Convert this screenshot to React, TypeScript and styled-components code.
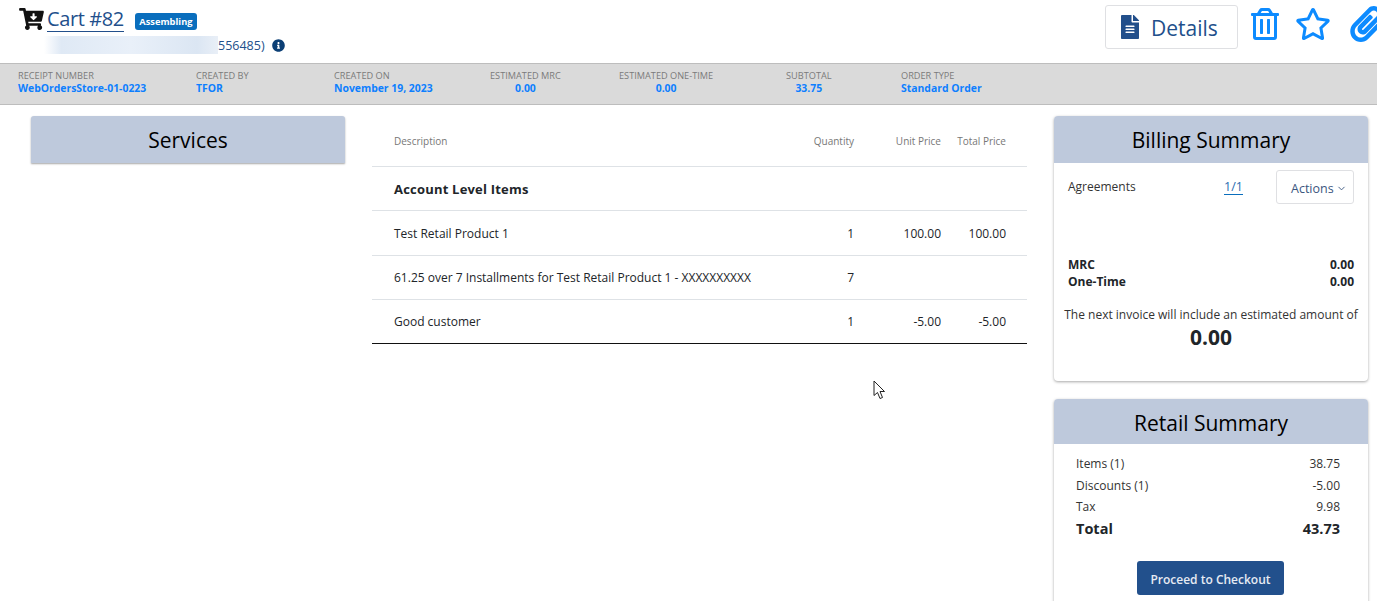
import React from "react";
import styled, { createGlobalStyle } from "styled-components";
import {
  FaCartArrowDown,
  FaFileAlt,
  FaInfoCircle,
  FaRegStar,
  FaRegTrashAlt,
  FaPaperclip,
} from "react-icons/fa";
import { LuChevronDown } from "react-icons/lu";

const metaItems = [
  { label: "RECEIPT NUMBER", value: "WebOrdersStore-01-0223" },
  { label: "CREATED BY", value: "TFOR" },
  { label: "CREATED ON", value: "November 19, 2023" },
  { label: "ESTIMATED MRC", value: "0.00", centered: true },
  { label: "ESTIMATED ONE-TIME", value: "0.00", centered: true },
  { label: "SUBTOTAL", value: "33.75", centered: true },
  { label: "ORDER TYPE", value: "Standard Order" },
];

const lineItems = [
  { name: "Test Retail Product 1", qty: "1", unit: "100.00", total: "100.00" },
  { name: "61.25 over 7 Installments for Test Retail Product 1 - XXXXXXXXXX", qty: "7", unit: "", total: "" },
  { name: "Good customer", qty: "1", unit: "-5.00", total: "-5.00" },
];

const retailRows = [
  { label: "Items (1)", value: "38.75" },
  { label: "Discounts (1)", value: "-5.00" },
  { label: "Tax", value: "9.98" },
];

const App = () => (
  <Page>
    <GlobalStyle />
    <Header>
      <TitleBlock>
        <TitleRow>
          <CartIcon />
          <CartTitle>Cart #82</CartTitle>
          <StatusBadge>Assembling</StatusBadge>
        </TitleRow>
        <CustomerRow>
          <Redacted />
          <CustomerId>556485)</CustomerId>
          <InfoIcon />
        </CustomerRow>
      </TitleBlock>
      <HeaderActions>
        <DetailsButton>
          <DetailsIcon />
          <DetailsLabel>Details</DetailsLabel>
        </DetailsButton>
        <IconSlot $left={11}><FaRegTrashAlt size={32} /></IconSlot>
        <IconSlot $left={14}><FaRegStar size={36} /></IconSlot>
        <IconSlot $left={17}><FaPaperclip size={36} /></IconSlot>
      </HeaderActions>
    </Header>

    <MetaBar>
      {metaItems.map((item) => (
        <MetaItem key={item.label} $centered={item.centered}>
          <MetaLabel>{item.label}</MetaLabel>
          <MetaValue>{item.value}</MetaValue>
        </MetaItem>
      ))}
    </MetaBar>

    <Main>
      <LeftColumn>
        <ServicesHeader>Services</ServicesHeader>
      </LeftColumn>

      <TableColumn>
        <HeadRow>
          <span>Description</span>
          <Num>Quantity</Num>
          <Num>Unit Price</Num>
          <Num>Total Price</Num>
        </HeadRow>
        <SectionRow>Account Level Items</SectionRow>
        {lineItems.map((line, i) => (
          <ItemRow key={line.name} $last={i === lineItems.length - 1}>
            <span>{line.name}</span>
            <Num>{line.qty}</Num>
            <Num>{line.unit}</Num>
            <Num>{line.total}</Num>
          </ItemRow>
        ))}
      </TableColumn>

      <RightColumn>
        <BillingCard>
          <CardHeader>Billing Summary</CardHeader>
          <AgreementsRow>
            <span>Agreements</span>
            <AgreementLink>1/1</AgreementLink>
            <ActionsButton>
              Actions
              <LuChevronDown size={11} />
            </ActionsButton>
          </AgreementsRow>
          <TotalsBlock>
            <TotalsRow><span>MRC</span><span>0.00</span></TotalsRow>
            <TotalsRow><span>One-Time</span><span>0.00</span></TotalsRow>
          </TotalsBlock>
          <InvoiceNote>The next invoice will include an estimated amount of</InvoiceNote>
          <InvoiceAmount>0.00</InvoiceAmount>
        </BillingCard>

        <RetailCard>
          <RetailHeader>Retail Summary</RetailHeader>
          <RetailBody>
            {retailRows.map((row) => (
              <RetailRow key={row.label}>
                <span>{row.label}</span>
                <span>{row.value}</span>
              </RetailRow>
            ))}
            <RetailTotal>
              <span>Total</span>
              <span>43.73</span>
            </RetailTotal>
          </RetailBody>
          <CheckoutWrap>
            <CheckoutButton>Proceed to Checkout</CheckoutButton>
          </CheckoutWrap>
        </RetailCard>
      </RightColumn>
    </Main>

    <MouseCursor width="16" height="21" viewBox="0 0 16 21">
      <path
        d="M1 1 L1 15.5 L4.5 12.5 L7 18.5 L9.5 17.5 L7 11.5 L11.5 11.5 Z"
        fill="#fff"
        stroke="#222"
        strokeWidth="1"
      />
    </MouseCursor>
  </Page>
);

export default App;

const GlobalStyle = createGlobalStyle`
  html, body {
    margin: 0;
    padding: 0;
    background: #fff;
  }
  body {
    font-family: "Open Sans", "Noto Sans", sans-serif;
    color: #212529;
  }
`;

const Page = styled.div`
  position: relative;
  width: 1377px;
  height: 601px;
  overflow: hidden;
`;

const Header = styled.header`
  display: flex;
  justify-content: space-between;
  height: 63px;
  border-bottom: 1px solid #bdbdbd;
`;

const TitleBlock = styled.div`
  display: flex;
  flex-direction: column;
  padding: 6px 0 0 19px;
`;

const TitleRow = styled.div`
  display: flex;
  align-items: center;
  height: 26px;
`;

const CartIcon = styled(FaCartArrowDown)`
  width: 25px;
  height: 22px;
  margin-top: -1px;
  color: #111;
`;

const CartTitle = styled.a`
  margin: -1px 0 0 3px;
  font-size: 20px;
  line-height: 25px;
  color: #224f8b;
  border-bottom: 1px solid #224f8b;
  letter-spacing: -0.4px;
`;

const StatusBadge = styled.span`
  margin: 4px 0 0 11px;
  padding: 0 4.5px;
  height: 17px;
  line-height: 17px;
  border-radius: 3px;
  background: #0a6ebd;
  color: #fff;
  font-size: 9.3px;
  font-weight: 700;
`;

const CustomerRow = styled.div`
  display: flex;
  align-items: center;
  height: 20px;
  margin-top: 3px;
`;

const Redacted = styled.div`
  width: 174px;
  height: 18px;
  margin-left: 25px;
  background: linear-gradient(90deg, #fff 0%, #dfe9f5 10%, #e9f0f9 50%, #dbe6f3 88%, #e9eff7 100%);
`;

const CustomerId = styled.span`
  font-size: 12.5px;
  color: #224f8b;
`;

const InfoIcon = styled(FaInfoCircle)`
  width: 13px;
  height: 13px;
  margin-left: 7px;
  color: #0b3f75;
`;

const HeaderActions = styled.div`
  display: flex;
  align-items: flex-start;
  padding: 5px 0 0 0;
  width: 272px;
  flex: none;
`;

const DetailsButton = styled.button`
  display: flex;
  flex: none;
  align-items: center;
  gap: 12px;
  width: 133px;
  height: 44px;
  padding: 0 0 0 15px;
  background: #fff;
  border: 1px solid #dfe0e3;
  border-radius: 3px;
  color: #224f8b;
  font-family: inherit;
  font-size: 21px;
  font-weight: 500;
`;

const DetailsIcon = styled(FaFileAlt)`
  width: 18px;
  height: 24px;
  flex: none;
`;

const DetailsLabel = styled.span`
  padding-top: 2px;
`;

const IconSlot = styled.div<{ $left: number }>`
  display: flex;
  flex: none;
  align-items: center;
  height: 32px;
  margin: 3px 0 0 ${({ $left }) => $left}px;
  color: #0d8bff;

  svg {
    flex: none;
  }
`;

const MetaBar = styled.div`
  display: grid;
  grid-template-columns: 178px 138px 156px 129px 167px 115px 1fr;
  height: 41px;
  padding: 6px 0 0 18px;
  box-sizing: border-box;
  background: #dadada;
  border-bottom: 1px solid #bdbdbd;
`;

const MetaItem = styled.div<{ $centered?: boolean }>`
  justify-self: start;
  text-align: ${({ $centered }) => ($centered ? "center" : "left")};
  white-space: nowrap;
`;

const MetaLabel = styled.div`
  font-size: 9.2px;
  line-height: 12px;
  color: #7b7b7b;
`;

const MetaValue = styled.div`
  font-size: 10.4px;
  line-height: 13px;
  font-weight: 700;
  color: #0d7fff;
`;

const Main = styled.main`
  display: flex;
  padding: 11px 9px 0 31px;
`;

const LeftColumn = styled.div`
  width: 314px;
  flex: none;
`;

const ServicesHeader = styled.div`
  height: 47px;
  line-height: 48px;
  border-radius: 3px 3px 0 0;
  background: #bec9dc;
  box-shadow: 0 1px 2px rgba(0, 0, 0, 0.35);
  text-align: center;
  font-size: 21px;
  font-weight: 500;
  color: #000;
`;

const TableColumn = styled.div`
  width: 655px;
  flex: none;
  margin: 0 27px;
`;

const rowGrid = `
  display: grid;
  grid-template-columns: 1fr 60px 87px 65px;
  padding: 0 21px 0 22px;
  align-items: center;
`;

const HeadRow = styled.div`
  ${rowGrid}
  height: 50px;
  border-bottom: 1px solid #dee2e6;
  font-size: 10px;
  color: #777;
`;

const Num = styled.span`
  text-align: right;
  white-space: nowrap;
`;

const SectionRow = styled.div`
  height: 43px;
  line-height: 45px;
  padding-left: 22px;
  border-bottom: 1px solid #dee2e6;
  font-size: 13px;
  font-weight: 700;
  letter-spacing: 0.2px;
  color: #212529;
`;

const ItemRow = styled.div<{ $last?: boolean }>`
  ${rowGrid}
  height: 44px;
  box-sizing: border-box;
  border-bottom: 1px solid ${({ $last }) => ($last ? "#111" : "#dee2e6")};
  font-size: 12px;
  color: #212529;

  ${SectionRow} + & {
    height: 45px;
  }
`;

const RightColumn = styled.div`
  width: 314px;
  flex: none;
  display: flex;
  flex-direction: column;
  gap: 18px;
`;

const Card = styled.section`
  border-radius: 4px;
  background: #fff;
  box-shadow: 0 1px 3px rgba(0, 0, 0, 0.35);
  overflow: hidden;
`;

const BillingCard = styled(Card)`
  height: 265px;
`;

const RetailCard = styled(Card)`
  height: 210px;
`;

const CardHeader = styled.div`
  height: 47px;
  line-height: 49px;
  background: #bec9dc;
  text-align: center;
  font-size: 21px;
  font-weight: 500;
  color: #000;
`;

const RetailHeader = styled(CardHeader)`
  height: 45px;
  line-height: 49px;
`;

const AgreementsRow = styled.div`
  display: grid;
  grid-template-columns: 156px 52px 78px;
  align-items: start;
  padding: 7px 14px 0 14px;
  font-size: 12px;
  color: #333;
  line-height: 33px;
  height: 41px;
`;

const AgreementLink = styled.a`
  justify-self: start;
  line-height: 15px;
  margin-top: 9px;
  font-size: 12.5px;
  color: #2b6cb0;
  border-bottom: 1px solid #0a6ebd;
`;

const ActionsButton = styled.button`
  display: flex;
  align-items: center;
  gap: 2px;
  height: 34px;
  width: 78px;
  padding: 2px 0 0 14px;
  background: #fff;
  border: 1px solid #dfe0e3;
  border-radius: 3px;
  color: #3b5680;
  font-family: inherit;
  font-size: 12.5px;
`;

const TotalsBlock = styled.div`
  padding: 45px 14px 0 14px;
  font-size: 12px;
  line-height: 17px;
  font-weight: 700;
`;

const TotalsRow = styled.div`
  display: flex;
  justify-content: space-between;
`;

const InvoiceNote = styled.div`
  margin-top: 16px;
  text-align: center;
  font-size: 12px;
  line-height: 17px;
  color: #333;
  white-space: nowrap;
`;

const InvoiceAmount = styled.div`
  margin-top: 1px;
  text-align: center;
  font-size: 21px;
  line-height: 27px;
  font-weight: 700;
`;

const RetailBody = styled.div`
  padding: 9px 28px 0 22px;
  font-size: 12px;
  color: #333;
`;

const RetailRow = styled.div`
  display: flex;
  justify-content: space-between;
  height: 21.5px;
  line-height: 21.5px;
`;

const RetailTotal = styled(RetailRow)`
  height: 22px;
  line-height: 21px;
  font-size: 14.5px;
  font-weight: 700;
  color: #212529;
`;

const CheckoutWrap = styled.div`
  display: flex;
  justify-content: center;
  margin-top: 21px;
  padding-right: 1px;
`;

const CheckoutButton = styled.button`
  width: 147px;
  height: 34px;
  padding: 3px 0 0;
  border: none;
  border-radius: 3px;
  background: #22508c;
  color: #e6ebf3;
  font-family: inherit;
  font-size: 12px;
  font-weight: 600;
`;

const MouseCursor = styled.svg`
  position: absolute;
  left: 873px;
  top: 380px;
`;
